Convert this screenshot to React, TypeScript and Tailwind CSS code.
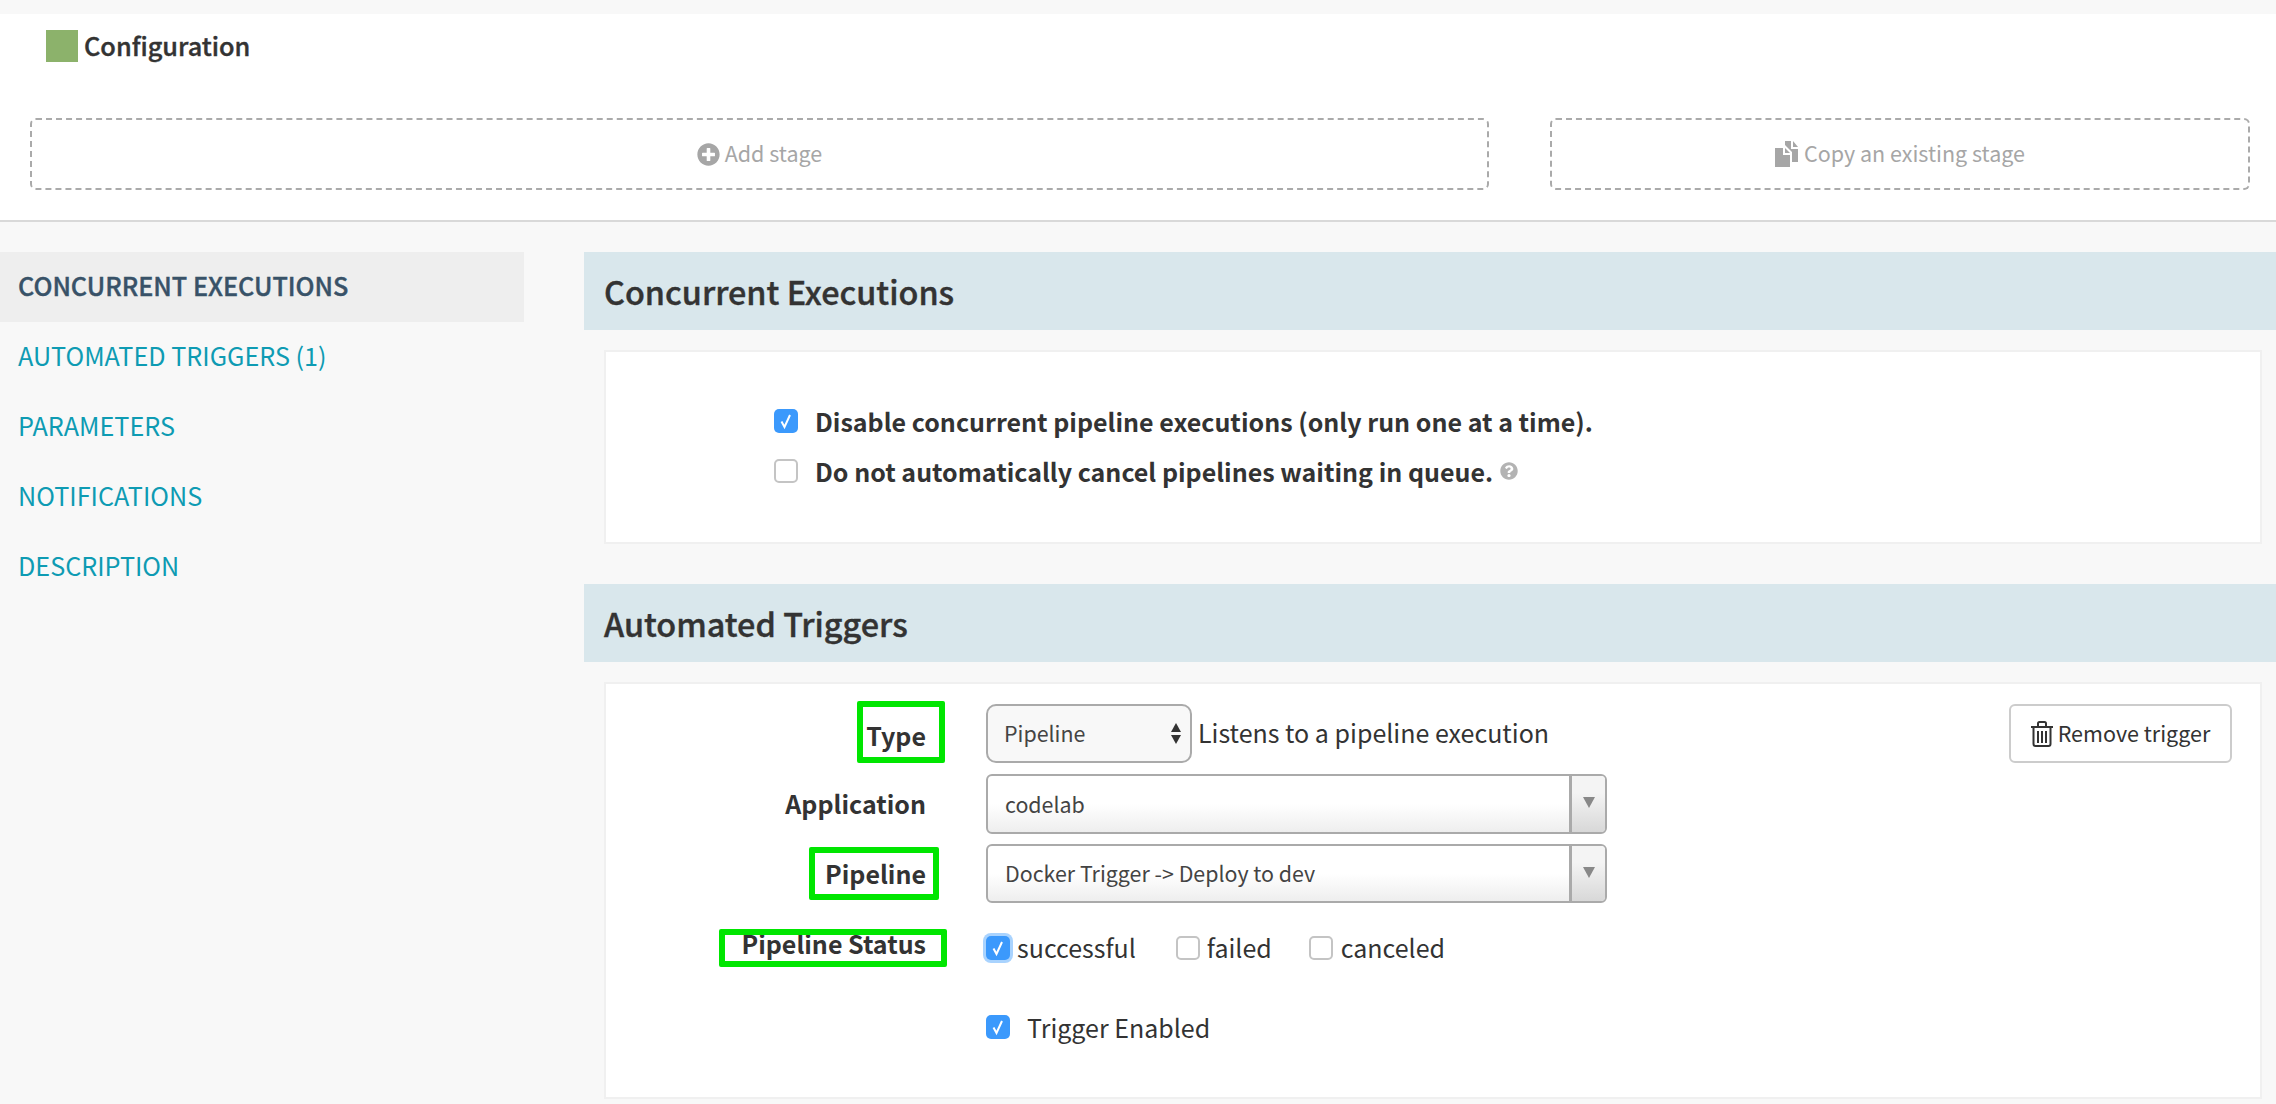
import { FaPlusCircle, FaQuestionCircle } from 'react-icons/fa'

const navItems = ['AUTOMATED TRIGGERS (1)', 'PARAMETERS', 'NOTIFICATIONS', 'DESCRIPTION']

function Checkbox({ checked = false, focused = false }: { checked?: boolean; focused?: boolean }) {
  if (!checked) {
    return <span className="block h-6 w-6 shrink-0 rounded-[5px] border-2 border-[#c4c4c4] bg-white" />
  }
  return (
    <span
      className={
        focused
          ? 'flex h-6 w-6 shrink-0 items-center justify-center rounded-[5px] bg-[#3b99fc] shadow-[0_0_0_3px_#a9d3fe]'
          : 'flex h-6 w-6 shrink-0 items-center justify-center rounded-[5px] bg-[#3b99fc]'
      }
    >
      <svg viewBox="0 0 24 24" className="h-6 w-6" fill="none" stroke="#fff" strokeWidth="2">
        <path d="M7.500 12.500 L10.500 18 L16 6" />
      </svg>
    </span>
  )
}

function CopyIcon() {
  return (
    <svg viewBox="0 0 24 26" className="h-[26px] w-6" fill="#a6a6a6">
      <path d="M0 7h8v7h7v12H0z" />
      <path d="M10 7l5 5h-5z" />
      <path d="M10 0h6v8h7v13h-6V11l-7-7z" />
      <path d="M18 0l5 6h-5z" />
    </svg>
  )
}

function TrashIcon() {
  return (
    <svg viewBox="0 0 22 26" className="h-[26px] w-[22px]" fill="none" stroke="#333" strokeWidth="2">
      <path d="M0 6h22M7 6V2.500q0-1.500 1.500-1.500h5q1.500 0 1.500 1.500V6" />
      <path d="M2.500 6v17q0 2 2 2h13q2 0 2-2V6" />
      <path d="M7 10v12M11 10v12M15 10v12" />
    </svg>
  )
}

function ChosenSelect({ value }: { value: string }) {
  return (
    <div className="flex h-full w-[621px] overflow-hidden rounded-[6px] border-2 border-[#aaaaaa] bg-[linear-gradient(#ffffff_50%,#eeeeee)]">
      <span className="flex-1 self-center pl-[17px] text-[21.400px] text-[#444444]">{value}</span>
      <span className="flex w-[36px] justify-center border-l-[3px] border-[#aaaaaa] bg-[linear-gradient(#f4f4f4_30%,#d8d8d8)] pt-[21px]">
        <span className="h-0 w-0 border-x-[6px] border-t-[11px] border-x-transparent border-t-[#888888]" />
      </span>
    </div>
  )
}

function Label({ children, className }: { children: string; className: string }) {
  return <div className={`w-[320px] shrink-0 text-right text-[25px] font-bold text-[#333333] ${className}`}>{children}</div>
}

export default function App() {
  return (
    <div className="h-[1104px] w-[2276px] overflow-hidden bg-[#f8f8f8] font-['Noto_Sans_CJK_SC','Noto_Sans',sans-serif] text-[#333333]">
      <div className="mt-[14px] h-[208px] border-b-2 border-[#d9d9d9] bg-white pt-4">
        <div className="flex h-8 items-center pl-[46px]">
          <span className="h-8 w-8 bg-[#8cb26b]" />
          <span className="ml-[6px] pb-[1px] text-[25.300px] font-medium text-[#333333] [-webkit-text-stroke:0.4px_#333333]">Configuration</span>
        </div>
        <div className="mt-[56px] flex gap-[61px] pl-[30px] text-[21.500px] text-[#a6a6a6]">
          <div className="flex h-[72px] w-[1459px] items-center justify-center gap-[5px] rounded-[6px] border-2 border-dashed border-[#aaaaaa]">
            <FaPlusCircle className="text-[23px]" />
            <span className="pb-[2px]">Add stage</span>
          </div>
          <div className="flex h-[72px] w-[700px] items-center justify-center gap-[5px] rounded-[6px] border-2 border-dashed border-[#aaaaaa]">
            <CopyIcon />
            <span className="pb-[2px]">Copy an existing stage</span>
          </div>
        </div>
      </div>

      <div className="flex gap-[60px] pt-[30px]">
        <nav className="w-[524px] shrink-0 text-[25.200px] text-[#0e9bb3]">
          <div className="flex h-[70px] items-center bg-[#eeeeee] pb-[3px] pl-[18px] font-medium text-[#385268] [-webkit-text-stroke:0.4px_#385268]">CONCURRENT EXECUTIONS</div>
          {navItems.map((item) => (
            <div key={item} className="flex h-[70px] items-center pb-[3px] pl-[18px]">
              {item}
            </div>
          ))}
        </nav>

        <main className="w-[1692px] shrink-0">
          <h2 className="flex h-[78px] items-center bg-[#d9e7ec] pl-5 text-[32.400px] font-medium text-[#333333] [-webkit-text-stroke:0.4px_#333333]">Concurrent Executions</h2>
          <section className="ml-5 mt-5 h-[194px] w-[1658px] border-2 border-[#f0f0f0] bg-white pl-[168px] pt-[57px] text-[25px] font-bold">
            <div className="flex h-6 items-center gap-[17px]">
              <Checkbox checked />
              <span className="pt-[2px]">Disable concurrent pipeline executions (only run one at a time).</span>
            </div>
            <div className="mt-[26px] flex h-6 items-center gap-[17px]">
              <Checkbox />
              <span className="pt-[2px]">Do not automatically cancel pipelines waiting in queue.</span>
              <FaQuestionCircle className="-ml-[10px] text-[18px] text-[#b3b3b3]" />
            </div>
          </section>

          <h2 className="mt-10 flex h-[78px] items-center bg-[#d9e7ec] pl-5 text-[32.400px] font-medium text-[#333333] [-webkit-text-stroke:0.4px_#333333]">Automated Triggers</h2>
          <section className="ml-5 mt-5 h-[417px] w-[1658px] border-2 border-[#f0f0f0] bg-white pt-5">
            <div className="flex h-[59px] items-center gap-[60px]">
              <Label className="pt-[5px]">Type</Label>
              <div className="flex h-full w-[206px] items-center justify-between rounded-[10px] border-2 border-[#aaaaaa] bg-[#f8f8f8] pl-[16px] pr-[9px] text-[21.400px] text-[#444444]">
                <span>Pipeline</span>
                <span className="flex flex-col gap-[3px]">
                  <span className="h-0 w-0 border-x-[5px] border-b-[9px] border-x-transparent border-b-[#333333]" />
                  <span className="h-0 w-0 border-x-[5px] border-t-[9px] border-x-transparent border-t-[#333333]" />
                </span>
              </div>
              <span className="-ml-[54px] pb-[1px] text-[25px]">Listens to a pipeline execution</span>
              <button className="ml-auto mr-[28px] flex h-full w-[223px] items-center justify-center gap-[5px] rounded-[6px] border-2 border-[#cccccc] bg-white text-[21.500px]">
                <TrashIcon />
                <span>Remove trigger</span>
              </button>
            </div>
            <div className="mt-[11px] flex h-[60px] items-center gap-[60px]">
              <Label className="pb-[1px]">Application</Label>
              <ChosenSelect value="codelab" />
            </div>
            <div className="mt-[10px] flex h-[59px] items-center gap-[60px]">
              <Label className="pt-[1px]">Pipeline</Label>
              <ChosenSelect value="Docker Trigger -> Deploy to dev" />
            </div>
            <div className="mt-[32px] flex h-6 items-center gap-[60px]">
              <Label className="pb-[6px]">Pipeline Status</Label>
              <div className="flex items-center pt-[2px] text-[25px]">
                <Checkbox checked focused />
                <span className="ml-[7px]">successful</span>
                <span className="ml-[40px]"><Checkbox /></span>
                <span className="ml-[7px]">failed</span>
                <span className="ml-[37px]"><Checkbox /></span>
                <span className="ml-[8px]">canceled</span>
              </div>
            </div>
            <div className="mt-[56px] flex h-6 items-center gap-[17px] pl-[380px] text-[25px]">
              <Checkbox checked />
              <span className="pt-[2px]">Trigger Enabled</span>
            </div>
          </section>
        </main>
      </div>

      {/* annotation boxes drawn over the screenshot */}
      <div className="absolute left-[857px] top-[701px] h-[62px] w-[88px] rounded-[2px] border-[6px] border-[#00e600]" />
      <div className="absolute left-[809px] top-[847px] h-[53px] w-[130px] rounded-[2px] border-[6px] border-[#00e600]" />
      <div className="absolute left-[719px] top-[929px] h-[38px] w-[228px] rounded-[2px] border-[6px] border-[#00e600]" />
    </div>
  )
}
